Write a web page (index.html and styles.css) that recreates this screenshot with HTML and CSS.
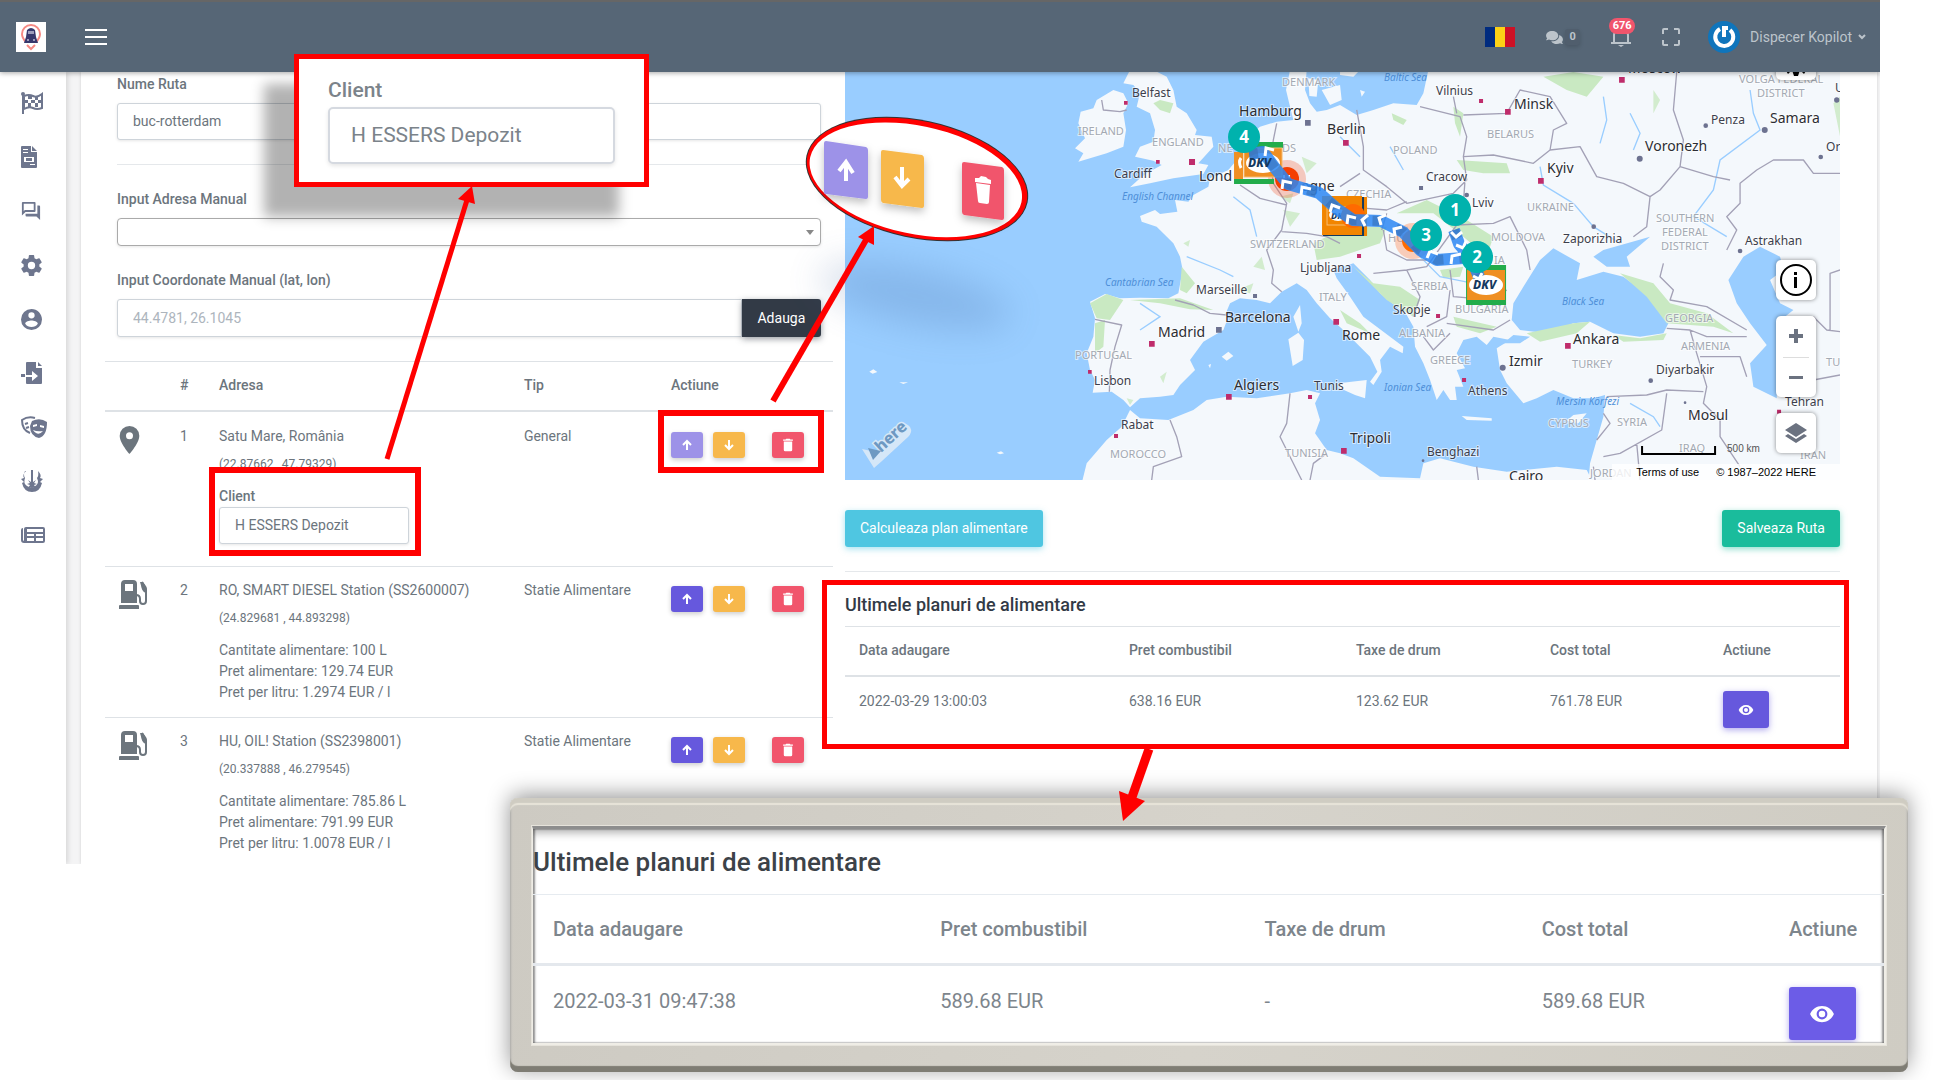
FILE: index.html
```html
<!DOCTYPE html>
<html lang="ro">
<head>
<meta charset="utf-8">
<meta name="viewport" content="width=device-width, initial-scale=1">
<title>Kopilot</title>
<link rel="stylesheet" href="styles.css">
</head>
<body>
<svg class="sprite" aria-hidden="true">
  <symbol id="i-up" viewBox="0 0 24 24"><path d="M12 22V4M4 12l8-8 8 8" fill="none" stroke="currentColor" stroke-width="4"/></symbol>
  <symbol id="i-down" viewBox="0 0 24 24"><path d="M12 2v18M4 12l8 8 8-8" fill="none" stroke="currentColor" stroke-width="4"/></symbol>
  <symbol id="i-trash" viewBox="4 2 16 20"><path d="M19,4H15.5L14.5,3H9.5L8.5,4H5V6H19M6,19A2,2 0 0,0 8,21H16A2,2 0 0,0 18,19V7H6V19Z"/></symbol>
  <symbol id="i-eye" viewBox="0 0 24 24"><path d="M12,9A3,3 0 0,0 9,12A3,3 0 0,0 12,15A3,3 0 0,0 15,12A3,3 0 0,0 12,9M12,17A5,5 0 0,1 7,12A5,5 0 0,1 12,7A5,5 0 0,1 17,12A5,5 0 0,1 12,17M12,4.5C7,4.5 2.73,7.61 1,12C2.73,16.39 7,19.5 12,19.5C17,19.5 21.27,16.39 23,12C21.27,7.61 17,4.5 12,4.5Z"/></symbol>
  <symbol id="i-pin" viewBox="5 2 14 20"><path d="M12,11.5A2.5,2.5 0 0,1 9.5,9A2.5,2.5 0 0,1 12,6.5A2.5,2.5 0 0,1 14.5,9A2.5,2.5 0 0,1 12,11.5M12,2A7,7 0 0,0 5,9C5,14.25 12,22 12,22C12,22 19,14.25 19,9A7,7 0 0,0 12,2Z"/></symbol>
  <symbol id="i-pump" viewBox="0 0 29 29"><path fill-rule="evenodd" d="M2 23V4q0-4 4-4h8q4 0 4 4v19zM6 4v7h8V4zM1 25h18q1 0 1 1v3H0v-3q0-1 1-1z"/><path d="M17 15q4 0 4 4v2c0 4 6 4 6 0V10q0-3-2-5l-2-3 1 7q1 3 4 3" fill="none" stroke="currentColor" stroke-width="2"/><path d="M21 2l3 0 4 7-1 3-4-3z"/></symbol>
</svg>

<div class="stage">
<div class="app">
  <header class="topbar">
    <a class="brand" href="#" aria-label="Kopilot"><svg width="30" height="30" viewBox="0 0 30 30"><path fill="#fff" d="M0 0h30v30H0z"/><path d="M15 3c-5 0-9 4-9 9 0 3 2 6 4 8M15 3c5 0 9 4 9 9 0 3-2 6-4 8M11 23l4 4 4-4" fill="none" stroke="#f58a84" stroke-width="2"/><path fill="#37386c" d="M11 8q4-4 8 0l1 7 2 6H8l2-6z"/><path fill="#9d9dbb" d="M12 9h6v3h-6zM11 17h2v2h-2zM17 17h2v2h-2z"/></svg></a>
    <button class="burger" type="button" aria-label="Meniu"><span></span><span></span><span></span></button>
    <div class="tools">
      <svg class="flag" width="30" height="20" viewBox="0 0 30 20"><path fill="#002b7f" d="M0 0h10v20H0z"/><path fill="#fcd116" d="M10 0h10v20H10z"/><path fill="#ce1126" d="M20 0h10v20H20z"/></svg>
      <button class="chat" type="button" aria-label="Mesaje"><svg width="17" height="15" viewBox="0 0 576 512"><path d="M416 192c0-88.400-93.100-160-208-160S0 103.600 0 192c0 34.300 14.100 65.900 38 92-13.400 30.200-35.500 54.200-35.800 54.500-2.200 2.300-2.800 5.700-1.500 8.700S4.800 352 8 352c36.600 0 66.900-12.300 88.700-25 32.200 15.700 70.300 25 111.300 25 114.900 0 208-71.600 208-160zm122 220c23.900-26 38-57.700 38-92 0-66.900-53.500-124.200-129.300-148.100.9 6.600 1.300 13.300 1.300 20.100 0 105.900-107.700 192-240 192-10.800 0-21.300-.8-31.700-1.900C207.800 439.600 281.800 480 368 480c41 0 79.100-9.200 111.300-25 21.800 12.700 52.100 25 88.700 25 3.200 0 6.100-1.900 7.300-4.800 1.300-2.900.7-6.300-1.500-8.700-.3-.3-22.400-24.200-35.800-54.500z"/></svg><span class="count">0</span></button>
      <button class="bell" type="button" aria-label="Notificari"><svg width="22" height="22" viewBox="0 0 22 22"><path d="M1 17h20M4 17V9a7 7 0 0 1 14 0v8" fill="none" stroke="currentColor" stroke-width="2"/><path d="M8 19h6l-3 2z"/></svg><span class="alerts">676</span></button>
      <button class="full" type="button" aria-label="Ecran complet"><svg width="18" height="18" viewBox="0 0 18 18"><path d="M1 6V2q0-1 1-1h4M12 1h4q1 0 1 1v4M17 12v4q0 1-1 1h-4M6 17H2q-1 0-1-1v-4" fill="none" stroke="currentColor" stroke-width="2"/></svg></button>
      <button class="user" type="button"><svg width="32" height="32" viewBox="0 0 32 32"><circle cx="16" cy="16" r="16" fill="#0f75bc"/><path d="M12 8a9 9 0 1 0 10 1M16 5v11M14 7h6" fill="none" stroke="#fff" stroke-width="4"/></svg><span>Dispecer Kopilot</span><svg width="8" height="6" viewBox="0 0 8 6"><path d="M1 1l3 3 3-3" fill="none" stroke="currentColor" stroke-width="2"/></svg></button>
    </div>
  </header>

  <div class="shell">
    <nav class="sidebar" aria-label="Navigare">
      <a href="#" aria-label="Curse"><svg width="22" height="22" viewBox="0 0 22 22"><circle cx="2" cy="2" r="2"/><path d="M1 2h2v20H1z"/><path d="M3 4q5-2 9 0t9-2v14q-5 2-9 0t-9 1z" fill="none" stroke="currentColor" stroke-width="2"/><path d="M7 4h4v3H7zM14 5h3v3h-3zM4 8h3v3H4zM10 8h4v3h-4zM17 8h3v3h-3zM7 11h3v4H7zM14 11h3v4h-3z"/></svg></a>
      <a href="#" aria-label="Facturi"><svg width="16" height="22" viewBox="0 0 16 22"><path fill-rule="evenodd" d="M0 1q0-1 1-1h9v6h6v15q0 1-1 1H1q-1 0-1-1zM2 3v1h5V3zM2 6v1h5V6zM3 11v5h10v-5zM9 18v1h5v-1zM5 12h6v3H5zM11 0l5 5h-5z"/></svg></a>
      <a href="#" aria-label="Mesaje"><svg width="20" height="20" viewBox="1 1 22 22"><path d="M15,4V11H5.170L4,12.170V4H15M16,2H3A1,1 0 0,0 2,3V17L6,13H16A1,1 0 0,0 17,12V3A1,1 0 0,0 16,2M21,6H19V15H6V17A1,1 0 0,0 7,18H18L22,22V7A1,1 0 0,0 21,6Z"/></svg></a>
      <a href="#" aria-label="Setari"><svg width="21" height="21" viewBox="2 2 20 20"><path d="M12,15.500A3.500,3.500 0 0,1 8.500,12A3.500,3.500 0 0,1 12,8.500A3.500,3.500 0 0,1 15.500,12A3.500,3.500 0 0,1 12,15.500M19.430,12.970C19.470,12.650 19.500,12.330 19.500,12C19.500,11.670 19.470,11.340 19.430,11L21.540,9.370C21.730,9.220 21.780,8.950 21.660,8.730L19.660,5.270C19.540,5.050 19.270,4.960 19.050,5.050L16.560,6.050C16.040,5.660 15.500,5.320 14.870,5.070L14.500,2.420C14.460,2.180 14.250,2 14,2H10C9.750,2 9.540,2.180 9.500,2.420L9.130,5.070C8.500,5.320 7.960,5.660 7.440,6.050L4.950,5.050C4.730,4.960 4.460,5.050 4.340,5.270L2.340,8.730C2.210,8.950 2.270,9.220 2.460,9.370L4.570,11C4.530,11.340 4.500,11.670 4.500,12C4.500,12.330 4.530,12.650 4.570,12.970L2.460,14.630C2.270,14.780 2.210,15.050 2.340,15.270L4.340,18.730C4.460,18.950 4.730,19.030 4.950,18.950L7.440,17.940C7.960,18.340 8.500,18.680 9.130,18.930L9.500,21.580C9.540,21.820 9.750,22 10,22H14C14.250,22 14.460,21.820 14.500,21.580L14.870,18.930C15.500,18.670 16.040,18.340 16.560,17.940L19.050,18.950C19.270,19.030 19.540,18.950 19.660,18.730L21.660,15.270C21.780,15.050 21.730,14.780 21.540,14.630L19.430,12.970Z"/></svg></a>
      <a href="#" aria-label="Cont"><svg width="21" height="21" viewBox="2 2 20 20"><path d="M12,19.200C9.500,19.200 7.290,17.920 6,16C6.030,14 10,12.900 12,12.900C14,12.900 17.970,14 18,16C16.710,17.920 14.500,19.200 12,19.200M12,5A3,3 0 0,1 15,8A3,3 0 0,1 12,11A3,3 0 0,1 9,8A3,3 0 0,1 12,5M12,2A10,10 0 0,0 2,12A10,10 0 0,0 12,22A10,10 0 0,0 22,12C22,6.470 17.500,2 12,2Z"/></svg></a>
      <a href="#" aria-label="Import"><svg width="22" height="22" viewBox="0 0 22 22"><path fill-rule="evenodd" d="M5 1q0-1 1-1h9v6h6v15q0 1-1 1H6q-1 0-1-1v-6h6v4l6-5-6-5v4H5zM0 12h4v3H0zM17 0l4 4h-4z"/></svg></a>
      <a href="#" aria-label="Roluri"><svg width="26" height="22" viewBox="0 0 26 22"><path d="M14 2Q7 0 1 4q0 10 8 13" fill="none" stroke="currentColor" stroke-width="2"/><path d="M4 8l3-1M5 12l3-1" stroke="currentColor" stroke-width="2"/><path fill-rule="evenodd" d="M11 5q8-4 15 1 0 14-8 16-9-2-9-12zM12 9v2l4-1V8zM19 9v2l4 1v-2zM12 14q5 7 10 1-6 1-10-1z"/></svg></a>
      <a href="#" aria-label="Ordine"><svg width="22" height="22" viewBox="0 0 22 22"><path d="M5 1Q1 5 3 8L0 9l3 3-2 1q2 9 10 9t10-9l-2-1 3-3-3-1q2-3-2-7 1 5-1 7 3 6-3 9-4 1-7-1-4-3-2-8-2-3 0-7z"/><path d="M10 0h2v12l3-2-2 3 3 1-3 1 2 3-3-1-1 3-1-3-3 1 2-3-3-1 3-1-2-3 3 2z"/></svg></a>
      <a href="#" aria-label="Stiri"><svg width="24" height="16" viewBox="0 0 24 16"><path fill-rule="evenodd" d="M5 0h17q2 0 2 2v12q0 2-2 2H3q-3 0-3-3V3q0-2 2-2v12q1 2 1 0V2q0-2 2-2zM6 2v3h16V2zM6 7v2h7V7zM15 7v2h7V7zM6 11v3h7v-3zM15 11v3h7v-3z"/></svg></a>
    </nav>

    <main class="card">
      <section class="col-form">
        <label class="lbl" for="nume">Nume Ruta</label>
        <input class="field" id="nume" type="text" value="buc-rotterdam">
        <hr>
        <label class="lbl" for="adresa">Input Adresa Manual</label>
        <div class="pick-wrap"><select class="pick" id="adresa"><option></option></select><svg width="8" height="5" viewBox="0 0 8 5"><path d="M0 0h8L4 5z"/></svg></div>
        <label class="lbl" for="coord">Input Coordonate Manual (lat, lon)</label>
        <div class="group"><input class="field" id="coord" type="text" placeholder="44.4781, 26.1045"><button class="add" type="button">Adauga</button></div>

        <table class="grid stops">
          <colgroup><col class="c-icon"><col class="c-no"><col><col class="c-type"><col class="c-act"></colgroup>
          <thead><tr><th></th><th>#</th><th>Adresa</th><th>Tip</th><th>Actiune</th></tr></thead>
          <tbody>
            <tr>
              <td><svg class="pin" width="21" height="28"><use href="#i-pin"/></svg></td><td>1</td>
              <td>Satu Mare, România<small>(22.87662 , 47.79329)</small>
                <label class="client-lbl" for="client">Client</label><input class="field client" id="client" type="text" value="H ESSERS Depozit"></td>
              <td>General</td>
              <td><div class="acts"><button class="b up faded" type="button" aria-label="Sus"><svg><use href="#i-up"/></svg></button><button class="b down" type="button" aria-label="Jos"><svg><use href="#i-down"/></svg></button><button class="b del" type="button" aria-label="Sterge"><svg><use href="#i-trash"/></svg></button></div></td>
            </tr>
            <tr>
              <td><svg width="29" height="29"><use href="#i-pump"/></svg></td><td>2</td>
              <td>RO, SMART DIESEL Station (SS2600007)<small>(24.829681 , 44.893298)</small>
                <div class="info">Cantitate alimentare: 100 L<br>Pret alimentare: 129.74 EUR<br>Pret per litru: 1.2974 EUR / l</div></td>
              <td>Statie Alimentare</td>
              <td><div class="acts"><button class="b up" type="button" aria-label="Sus"><svg><use href="#i-up"/></svg></button><button class="b down" type="button" aria-label="Jos"><svg><use href="#i-down"/></svg></button><button class="b del" type="button" aria-label="Sterge"><svg><use href="#i-trash"/></svg></button></div></td>
            </tr>
            <tr>
              <td><svg width="29" height="29"><use href="#i-pump"/></svg></td><td>3</td>
              <td>HU, OIL! Station (SS2398001)<small>(20.337888 , 46.279545)</small>
                <div class="info">Cantitate alimentare: 785.86 L<br>Pret alimentare: 791.99 EUR<br>Pret per litru: 1.0078 EUR / l</div></td>
              <td>Statie Alimentare</td>
              <td><div class="acts"><button class="b up" type="button" aria-label="Sus"><svg><use href="#i-up"/></svg></button><button class="b down" type="button" aria-label="Jos"><svg><use href="#i-down"/></svg></button><button class="b del" type="button" aria-label="Sterge"><svg><use href="#i-trash"/></svg></button></div></td>
            </tr>
          </tbody>
        </table>
      </section>

      <section class="col-map">
        <div class="map">
          <svg class="geo" viewBox="0 0 995 408" preserveAspectRatio="xMidYMid slice">
            <g transform="scale(.33333) translate(-15 -6)">
              <g class="land">
                <path d="M1350 0L1338 60 1350 110 1360 150 1310 155 1260 170 1235 190 1215 240 1190 270 1165 300 1110 325 1105 350 1060 375 1045 395 1005 390 1012 425 960 432 945 420 900 438 905 455 950 470 975 495 1000 520 1020 560 1028 600 1015 670 985 685 900 683 840 685 795 672 750 695 765 745 760 800 740 850 750 900 765 930 758 968 815 965 850 990 870 1012 900 985 960 980 1000 975 1020 945 1065 900 1050 870 1090 815 1150 780 1165 740 1155 735 1170 700 1200 685 1250 690 1290 700 1325 665 1370 640 1400 660 1430 700 1470 745 1510 780 1560 830 1590 860 1612 905 1590 935 1600 945 1625 905 1620 870 1650 830 1688 850 1690 830 1610 770 1570 740 1530 680 1490 625 1480 600 1540 580 1560 600 1590 630 1620 670 1700 735 1720 770 1725 830 1750 880 1770 930 1790 990 1810 960 1830 990 1850 990 1845 950 1870 950 1850 900 1875 895 1850 850 1870 810 1910 800 1940 825 1960 800 2010 810 1970 835 1980 900 2000 940 2050 1000 2090 985 2140 960 2200 985 2260 985 2295 975 2290 1040 2270 1110 2250 1180 2245 1240H3010V0z"/>
                <path d="M725 1240L740 1180 800 1110 845 1070 870 1020 900 1045 985 1050 1060 1020 1100 990 1160 980 1250 985 1350 970 1400 960 1440 970 1425 1000 1440 1050 1425 1090 1460 1140 1500 1150 1540 1165 1620 1220 1740 1225 1750 1180 1800 1165 1900 1190 2000 1205 2150 1190 2240 1200 2260 1240z"/>
                <path d="M870 0L850 40 880 45 900 70 890 110 930 130 945 180 940 215 900 230 885 260 940 272 965 285 920 310 900 325 870 352 930 340 1000 325 1090 312 1105 285 1075 280 1120 230 1115 200 1065 195 1070 180 1040 130 1010 110 1000 60 980 20 940 0z"/>
                <path d="M770 90L820 60 850 70 865 100 850 130 858 180 850 230 800 250 715 275 730 250 705 235 735 205 715 160 722 125 760 115z"/>
                <path d="M1360 740L1380 705 1385 760 1375 785zM1345 808L1375 788 1392 810 1388 870 1358 888zM1145 860L1165 845 1180 858 1160 872zM1105 885L1113 882 1110 895zM1195 842L1207 846zM1495 940L1580 930 1575 985 1545 975 1500 955zM1865 1038L1955 1045 1955 1052 1880 1050zM2180 1052L2200 1035 2240 1030 2215 1060z"/>
              </g>
              <g fill="#99cdff">
                <path d="M1400 0L1765 0 1750 70 1730 105 1660 100 1600 120 1550 135 1500 105 1460 120 1430 125 1410 100 1395 60z"/>
                <path d="M2050 650L2100 570 2140 535 2220 580 2210 630 2290 605 2350 620 2430 680 2485 760 2470 790 2400 800 2320 790 2250 755 2200 760 2120 790 2040 780 2015 750 2020 700zM2300 590L2260 560 2290 540 2430 500 2360 560 2370 590zM1990 820L2020 795 2070 800 2040 820z"/>
                <path d="M2710 560L2760 530 2820 560 2830 600 2790 630 2820 700 2860 720 2810 760 2810 985 2740 950 2730 880 2780 825 2730 760 2690 700 2665 630z"/>
              </g>
              <path class="land" d="M1405 25L1435 30 1430 80 1408 78zM1445 60L1500 45 1505 90 1470 105zM1500 0L1560 0 1540 20 1500 15zM1560 60L1575 65 1565 80z"/>
              <g fill="#c9e9c2">
                <path d="M750 700L800 672 850 690 830 720 810 750 770 745zM765 760L795 750 790 830 765 850zM870 690L1020 685 1120 720 1050 718 960 700zM1025 590L1065 640 1040 670 1020 660zM940 100L960 90 1000 100 990 130 960 120zM1420 520L1520 470 1640 470 1620 520 1500 560 1430 570zM1540 590L1600 640 1680 650 1740 690 1720 740 1640 690zM1670 430L1760 390 1880 450 1960 500 1940 560 1870 500 1780 430zM1850 270L2000 280 2010 310 1930 310 1870 300zM1655 130L1700 150 1690 165 1660 150zM2060 790L2200 760 2250 755 2210 790 2100 815zM2340 610L2440 640 2490 700 2600 730 2680 790 2620 770 2480 760 2420 680zM2320 795L2400 805 2480 790 2470 810 2350 815zM1840 740L1970 770 1920 790 1850 770zM1800 600L1870 590 1860 620 1810 625zM1500 720L1560 760 1590 790 1520 760zM1840 110L1870 130 1860 200 1845 160zM2110 20L2200 6 2290 20 2240 80 2180 60z"/>
                <path d="M1320 380L1360 370 1350 400zM1330 420L1380 430 1350 470zM1240 590L1265 560 1275 600zM1190 660L1240 640 1230 670zM1030 520L1050 510 1045 530zM960 920L980 905 970 940zM860 985L880 990 870 1005zM1385 260L1430 280 1400 310zM2440 60L2460 90 2440 130zM2980 100L3000 80 3000 200z" opacity=".8"/>
              </g>
              <g class="rivers"><path d="M2100 290L2110 345 2200 400 2260 470 2340 520M2730 60L2740 130 2760 180 2640 270 2620 360 2560 440 2660 500M2280 220L2300 150 2290 80M2370 130L2400 190 2380 240M1950 600L1900 640 1800 620 1740 560 1700 470M1500 200L1560 260M1650 230L1690 300M900 700L960 740 900 780M1180 620L1140 600 1040 560M1250 500L1230 420 1180 380M2370 1000L2440 1040 2460 1070"/></g>
              <g class="borders"><path d="M785 90L790 120 840 125 860 120M1005 690L1060 705 1110 730 1160 735M765 748L845 765 825 830 810 900 808 965M1310 160L1300 210 1290 270 1300 340 1340 400 1325 480 1280 540 1300 600 1295 640 1325 665M1200 345L1260 385 1340 405M1325 485L1400 490 1460 500 1500 520M1550 120L1570 230 1570 300 1640 350 1700 400 1840 370 1880 330 1870 260 1880 200 1860 140 1740 110M1500 350L1560 310M1580 415L1640 420 1700 395M1625 480L1640 430M1870 260L1960 255 2080 280 2130 240 2140 180 2180 160 2130 80 2040 60 2000 130 1870 135M1840 80L1850 130M2130 240L2220 230 2270 320 2350 340 2430 380 2420 470 2380 500M1875 330L1870 400 1850 465 1960 460 2010 440 2060 540 2070 600M1600 610L1700 600 1760 590 1850 465M1630 480L1640 540 1700 570 1760 570M1700 600L1740 680 1720 740M1830 600L1840 680 1960 690 2000 660M1830 660L1820 740 1760 770M1820 760L1960 780 2010 750M1750 800L1780 840 1830 790M2510 6L2500 120 2530 210 2520 290 2460 360 2430 380M2520 290L2620 320 2670 330M3000 310L2920 310 2890 270 2800 270 2750 300 2700 340 2700 400 2660 440 2690 480 2660 540M2470 580L2460 620 2500 660 2490 690 2600 710 2720 780M2480 775L2550 780 2570 850 2600 950 2590 1000 2640 1050 2640 1100 2700 1190M2300 980L2420 975 2480 960 2590 965M2480 970L2465 1080 2340 1150 2290 1160M2290 1030L2310 1060 2270 1110M2390 1120L2400 1230M2550 780L2600 800 2720 800M2580 860L2700 860 2720 920M2920 930L3000 915M2970 780V610L3000 600M2920 740L2960 780 3000 785M990 1050L1010 1100 1025 1160 940 1190 935 1230M1350 970L1340 1060 1320 1100 1350 1160 1385 1230M1410 1230L1420 1180 1460 1150M1910 1190L1915 1230M2260 1190L2265 1230"/></g>
              <g class="cap"><path d="M852 93h11v11h-11zM948 270h11v11h-11zM1047 267h18v18h-18zM1480 747h17v17h-17zM927 813h17v17h-17zM744 900h11v11h-11zM1158 972h17v17h-17zM1404 975h12v12h-12zM822 1092h12v12h-12zM1509 210h17v17h-17zM1917 87h12v12h-12zM1995 117h17v17h-17zM2094 324h17v17h-17zM2337 21h17v17h-17zM1551 552h12v12h-12zM1788 732h12v12h-12zM2175 819h17v17h-17zM1866 924h12v12h-12zM1503 1134h17v17h-17zM2811 1019h12v12h-12z"/></g>
              <g class="town"><path d="M1395 150h17v17h-17zM1239 672h12v12h-12zM1128 771h17v17h-17zM1737 348h12v12h-12z"/><circle cx="1880" cy="375" r="7"/><circle cx="2261" cy="470" r="7"/><circle cx="2399" cy="266" r="9"/><circle cx="2597" cy="167" r="7"/><circle cx="2774" cy="180" r="9"/><circle cx="2942" cy="261" r="7"/><circle cx="2990" cy="90" r="8"/><circle cx="2700" cy="543" r="7"/><circle cx="1988" cy="893" r="9"/><circle cx="2432" cy="932" r="7"/><circle cx="2535" cy="998" r="4"/><circle cx="1749" cy="1172" r="4"/></g>
              <path class="land" d="M88 905L100 898 112 906 98 911zM178 937L204 937 190 942zM470 1148L483 1144 492 1150 480 1153z"/>
            </g>
            <g class="sea"><text x="277" y="128">English Channel</text><text x="260" y="214">Cantabrian Sea</text><text x="539" y="9">Baltic Sea</text><text x="717" y="233">Black Sea</text><text x="539" y="319">Ionian Sea</text><text x="711" y="333">Mersin Körfezi</text></g>
            <g class="land-name"><text x="233" y="63">IRELAND</text><text x="307" y="74">ENGLAND</text><text x="437" y="14">DENMARK</text><text x="373" y="80">NE</text><text x="437" y="80">DS</text><text x="405" y="176">SWITZERLAND</text><text x="474" y="229">ITALY</text><text x="230" y="287">PORTUGAL</text><text x="265" y="386">MOROCCO</text><text x="440" y="385">TUNISIA</text><text x="642" y="66">BELARUS</text><text x="548" y="82">POLAND</text><text x="501" y="126">CZECHIA</text><text x="682" y="139">UKRAINE</text><text x="894" y="11">VOLGA FEDERAL</text><text x="912" y="25">DISTRICT</text><text x="543" y="170">HU</text><text x="646" y="169">MOLDOVA</text><text x="649" y="192">IA</text><text x="811" y="150">SOUTHERN</text><text x="817" y="164">FEDERAL</text><text x="816" y="178">DISTRICT</text><text x="566" y="218">SERBIA</text><text x="610" y="241">BULGARIA</text><text x="554" y="265">ALBANIA</text><text x="820" y="250">GEORGIA</text><text x="836" y="278">ARMENIA</text><text x="727" y="296">TURKEY</text><text x="585" y="292">GREECE</text><text x="772" y="354">SYRIA</text><text x="703" y="355">CYPRUS</text><text x="834" y="380">IRAQ</text><text x="955" y="387">IRAN</text><text x="745" y="405">JORDAN</text><text x="981" y="294">TU</text></g>
            <g class="city"><text x="287" y="25">Belfast</text><text x="269" y="106">Cardiff</text><text x="455" y="200">Ljubljana</text><text x="351" y="222">Marseille</text><text x="249" y="313">Lisbon</text><text x="469" y="318">Tunis</text><text x="276" y="357">Rabat</text><text x="591" y="23">Vilnius</text><text x="581" y="109">Cracow</text><text x="627" y="135">Lviv</text><text x="718" y="171">Zaporizhia</text><text x="900" y="173">Astrakhan</text><text x="866" y="52">Penza</text><text x="981" y="79">Or</text><text x="990" y="20">U</text><text x="548" y="242">Skopje</text><text x="811" y="302">Diyarbakir</text><text x="623" y="323">Athens</text><text x="940" y="334">Tehran</text><text x="582" y="384">Benghazi</text></g>
            <g class="city big"><text x="354" y="109">Lond</text><text x="394" y="44">Hamburg</text><text x="456" y="119">ogne</text><text x="380" y="250">Barcelona</text><text x="313" y="265">Madrid</text><text x="389" y="318">Algiers</text><text x="669" y="37">Minsk</text><text x="482" y="62">Berlin</text><text x="702" y="101">Kyiv</text><text x="800" y="79">Voronezh</text><text x="925" y="51">Samara</text><text x="783" y="1">Moscow</text><text x="497" y="268">Rome</text><text x="728" y="272">Ankara</text><text x="664" y="294">Izmir</text><text x="843" y="348">Mosul</text><text x="505" y="371">Tripoli</text><text x="664" y="409">Cairo</text></g>

            <g class="pins">
              <circle cx="442" cy="107" r="19" fill="#f55a30" opacity=".3"/><circle cx="442" cy="107" r="12" fill="#f43f00"/><path d="M439 103v3M444 103v4" stroke="#fff" stroke-width="2"/>
              <path fill="#22ac4b" d="M398 70h40v6h-40zM389 107h40v5h-40z"/><path fill="#ef8f22" d="M389 80h9v27h-9z"/><path fill="#ef8f22" stroke="#f7bd73" d="M399 76h38v29h-38z"/><path d="M396 86q-3 4 0 10" fill="none" stroke="#fff" stroke-width="3"/><ellipse cx="418" cy="91" rx="17" ry="10" fill="#fff"/>
              <path fill="#14395e" d="M478 125h42v39h-42z"/><path fill="#f28500" d="M477 124h40v39h-40zM519 125h3v39h-3z"/><path fill="none" stroke="#f7bd73" d="M482 135h32v18h-32z"/><ellipse cx="493" cy="143" rx="9" ry="6" fill="#fff"/><text class="dkv small" x="486" y="147">DK</text><circle cx="508" cy="144" r="12" fill="#ff6a00"/>
              <circle cx="568" cy="169" r="18" fill="#ff7a3c" opacity=".35"/><circle cx="568" cy="169" r="11" fill="#ff6a00"/>
              <path fill="#22ac4b" d="M621 193h40v40h-40z"/><path fill="#ef8f22" d="M622 198h38v30h-38z"/><ellipse cx="641" cy="213" rx="17" ry="10" fill="#fff"/>
              <path class="route" d="M404 82L418 80 430 96 443 112 474 121 492 137 508 148 536 149 558 160 575 178 592 188 618 186 628 182M609 158L614 172 626 186 634 205"/>
              <path class="heading" d="M404 82L418 80 430 96 443 112 474 121 492 137 508 148 536 149 558 160 575 178 592 188 618 186 628 182M609 158L614 172 626 186 634 205"/>
              <text class="dkv" x="403" y="95">DKV</text><text class="dkv" x="628" y="217">DKV</text>
              <g class="arrows"><path d="M420 84l1-8 8 2M437 117l1-8 9 2M456 123l1-8 9 2M485 140l2-7 8 3M502 152l1-8 8 2M520 154l-3-6 6-5M536 153l-2-7 7-3M550 164l-1-7 8-2M582 186l3-7 8 3M606 192l1-8 9-2M606 160l5 5 6-5M611 173l7 3 3-7M628 204l6 3 3-6"/></g>
              <g fill="#00b2ad"><circle cx="399" cy="65" r="16"/><circle cx="610" cy="138" r="16"/><circle cx="632" cy="185" r="16"/><circle cx="581" cy="163" r="16"/></g>
              <g class="num"><text x="399" y="71">4</text><text x="610" y="144">1</text><text x="632" y="191">2</text><text x="581" y="169">3</text></g>
            </g>
            <g class="here"><path d="M17 377l14 3 25-28q5-2 9 3 3 5-2 10l-26 24-8 7z"/><text transform="translate(36 381) rotate(-43)">here</text><path class="tip" d="M23 376l13 3-8 9z"/></g>
            <path d="M797 374v8h73v-8" fill="none" stroke="#000" stroke-width="2"/><text class="km" x="882" y="380">500 km</text>
          </svg>
          <div class="controls">
            <button class="ctl half" type="button" aria-label="Harta"><svg width="30" height="12" viewBox="0 0 30 12"><path d="M4 2l4-2 3 3-4 4zM11 3h8l-2 6h-4zM19 3l3-3 4 2-3 5z"/></svg></button>
            <button class="ctl" type="button" aria-label="Informatii"><svg width="34" height="34" viewBox="0 0 34 34"><circle cx="17" cy="17" r="15" fill="none" stroke="#000" stroke-width="2"/><path d="M15 14h3v11h-3zM15 9h3v3h-3z"/></svg></button>
            <div class="zoom"><button type="button" aria-label="Mareste"><svg width="14" height="14"><path d="M5 0h4v14H5zM0 5h14v4H0z"/></svg></button><button type="button" aria-label="Micsoreaza"><svg width="14" height="14"><path d="M0 6h14v3H0z"/></svg></button></div>
            <button class="ctl grey" type="button" aria-label="Straturi"><svg width="22" height="22" viewBox="0 0 22 22"><path d="M11 1l11 7-11 7L0 8zM0 14l3-2 8 5 8-5 3 2-11 7z"/></svg></button>
          </div>
          <div class="terms"><a href="#">Terms of use</a><span>© 1987–2022 HERE</span></div>
        </div>

        <div class="bar"><button class="btn sky" type="button">Calculeaza plan alimentare</button><button class="btn green" type="button">Salveaza Ruta</button></div>
        <hr>
        <h2>Ultimele planuri de alimentare</h2>
        <table class="grid plans">
          <colgroup><col class="p1"><col class="p2"><col class="p3"><col class="p4"><col class="p5"></colgroup>
          <thead><tr><th>Data adaugare</th><th>Pret combustibil</th><th>Taxe de drum</th><th>Cost total</th><th>Actiune</th></tr></thead>
          <tbody><tr><td>2022-03-29 13:00:03</td><td>638.16 EUR</td><td>123.62 EUR</td><td>761.78 EUR</td><td><button class="view" type="button" aria-label="Vezi"><svg width="16" height="16"><use href="#i-eye"/></svg></button></td></tr></tbody>
        </table>
      </section>
    </main>
  </div>
</div>

<div class="mark mark-client"></div>
<div class="mark mark-acts"></div>
<div class="mark mark-plans"></div>

<div class="zoom-client">
  <label for="client-zoom">Client</label>
  <input id="client-zoom" type="text" value="H ESSERS Depozit">
</div>

<section class="frame">
  <div class="pane">
    <h2>Ultimele planuri de alimentare</h2>
    <table>
      <colgroup><col class="f1"><col class="f2"><col class="f3"><col class="f4"><col class="f5"></colgroup>
      <thead><tr><th>Data adaugare</th><th>Pret combustibil</th><th>Taxe de drum</th><th>Cost total</th><th>Actiune</th></tr></thead>
      <tbody><tr><td>2022-03-31 09:47:38</td><td>589.68 EUR</td><td>-</td><td>589.68 EUR</td><td><button class="view" type="button" aria-label="Vezi"><svg width="26" height="26"><use href="#i-eye"/></svg></button></td></tr></tbody>
    </table>
  </div>
</section>

<svg class="notes" width="1200" height="830" viewBox="0 0 1200 830" aria-hidden="true">
  <defs><filter id="soft" x="-30%" y="-80%" width="160%" height="260%"><feGaussianBlur stdDeviation="18"/></filter><filter id="drop" x="-30%" y="-30%" width="160%" height="170%"><feDropShadow dx="0" dy="4" stdDeviation="4" flood-opacity=".25"/></filter></defs>
  <ellipse cx="915" cy="296" rx="98" ry="28" transform="rotate(12 915 296)" fill="#3b5f9a" opacity=".2" filter="url(#soft)"/>
  <g transform="rotate(12 917 179)"><ellipse cx="917" cy="179" rx="113" ry="59" fill="#333"/><ellipse cx="917" cy="179" rx="112" ry="58" fill="red"/><ellipse cx="916" cy="180" rx="108" ry="54" fill="#fff"/></g>
  <g filter="url(#drop)"><path fill="#9d92e8" d="M826 141q-2 0-2 2v49q0 2 2 2l40 5q2 0 2-2v-47q0-2-2-3z"/><path fill="#f7b84b" d="M883 150q-2 0-2 2v48q0 2 2 3l39 5q2 0 2-2v-48q0-2-2-3z"/><path fill="#f1556c" d="M964 162q-2 0-2 2v48q0 2 2 3l38 5q2 0 2-2v-48q0-2-2-3z"/></g>
  <path d="M846 181v-19M839 171l7-9 7 11M902 167v19M895 177l7 9 7-7" fill="none" stroke="#fff" stroke-width="4"/>
  <path fill="#fff" d="M975 178h4l2-2 5 1 2 2 3 1v4l-16-2zM976 183l14 2-1 17q0 2-2 2l-7-1q-2 0-2-2z"/>
  <g stroke="red" fill="red"><path d="M387 459L467 200" stroke-width="5"/><path stroke="none" d="M472 186l3 18-17-5z"/><path d="M773 401L866 240" stroke-width="6"/><path stroke="none" d="M874 226v19l-16-8z"/><path d="M1149 749L1131 800" stroke-width="9"/><path stroke="none" d="M1123 821l-4-30 26 10z"/></g>
</svg>
</div>
</body>
</html>
```
FILE: styles.css
```css
* { box-sizing: border-box; }
body { margin: 0; background: #fff; color: #6c757d; font: 14px/21px Roboto, sans-serif; }
button, input, select { font: inherit; color: inherit; margin: 0; }
button { border: 0; padding: 0; background: none; cursor: pointer; }
svg { display: block; fill: currentColor; }
h2 { margin: 0; color: #323a46; font-weight: 500; }
hr { border: 0; border-top: 1px solid #e5e8eb; margin: 24px 0; }
.sprite { position: absolute; width: 0; height: 0; }
.stage { position: relative; overflow: hidden; min-height: calc(100vh - 9px); }
.app { margin-right: 53px; overflow-x: clip; }

.topbar { position: relative; z-index: 1; display: flex; align-items: center; height: 72px; padding: 0 14px 0 16px; background: #566676; border-top: 2px solid #666; box-shadow: 0 1px 5px rgba(0,0,0,.35); color: #bcc4cb; }
.burger { display: grid; gap: 5px; width: 22px; margin-left: 39px; }
.burger span { height: 2px; background: #fff; }
.tools { display: flex; align-items: center; margin-left: auto; }
.chat { display: flex; align-items: center; gap: 2px; margin-left: 31px; }
.count { width: 15px; font-size: 11px; font-weight: 700; line-height: 16px; border-radius: 3px; background: #505e6d; box-shadow: 0 2px 4px rgba(0,0,0,.15); }
.bell { position: relative; margin-left: 30px; }
.alerts { position: absolute; left: -1px; top: -8px; width: 26px; border-radius: 8px; background: #f1556c; color: #fff; font-size: 11px; font-weight: 700; line-height: 16px; }
.full { margin-left: 30px; }
.user { display: flex; align-items: center; margin-left: 28px; }
.user span { margin: 0 6px 0 10px; }

.shell { display: flex; background: #f4f4f5; }
.sidebar { position: relative; flex: 0 0 66px; padding: 4px 0 0 21px; background: #fff; box-shadow: 2px 0 5px rgba(0,0,0,.12); clip-path: inset(0 -8px 0 0); color: #6e768e; }
.sidebar a { display: flex; align-items: center; height: 54px; color: inherit; }
.card { flex: 1; min-width: 0; display: grid; grid-template-columns: minmax(0, 5fr) minmax(0, 7fr); margin: 0 3px 0 15px; padding: 0 25px 0 24px; background: #fff; box-shadow: 0 0 3px rgba(0,0,0,.15); clip-path: inset(0 -4px); }
.col-form { padding: 2px 12px 0; }
.col-map { padding: 0 12px; }

.lbl { display: block; margin-bottom: 8px; font-weight: 500; }
.field { display: block; width: 100%; height: 37px; padding: 0 15px 1px; border: 1px solid #ced4da; border-radius: 3px; background: #fff; box-shadow: 0 1px 3px rgba(0,0,0,.1); }
.field::placeholder { color: #adb5bd; opacity: 1; }
.pick-wrap { display: grid; align-items: center; margin-bottom: 24px; }
.pick-wrap > * { grid-area: 1 / 1; }
.pick-wrap svg { justify-self: end; margin-right: 7px; color: #888; pointer-events: none; }
.pick { width: 100%; height: 28px; padding: 0 16px; border: 1px solid #aaa; border-radius: 4px; appearance: none; background: #fff; box-shadow: 0 1px 3px rgba(0,0,0,.1); }
.group { display: flex; }
.group .field { flex: 1; height: 38px; border-radius: 3px 0 0 3px; }
.add { width: 79px; background: #323a46; color: #fff; border-radius: 0 3px 3px 0; box-shadow: 0 2px 6px rgba(50,58,70,.5); }

.grid { border-collapse: separate; border-spacing: 0; table-layout: fixed; width: 100%; }
.grid th { height: 51px; padding: 0 14px 1px; border-top: 1px solid #dee2e6; border-bottom: 2px solid #dee2e6; text-align: left; font-weight: 500; }
.grid td { padding: 14px; vertical-align: top; }
.stops { width: calc(100% + 24px); margin: 24px -12px 0; }
.stops tr + tr td { padding-top: 13px; border-top: 1px solid #dee2e6; }
.stops tr:last-child td { padding-bottom: 10px; }
.stops td { white-space: nowrap; }
.c-icon { width: 61px; }
.c-no { width: 39px; }
.c-type { width: 147px; }
.c-act { width: 176px; }
.stops small { display: block; margin-top: 8px; font-size: 12px; line-height: 18px; }
.info { margin-top: 13px; }
.client-lbl { display: block; margin: 13px 0 0; font-weight: 500; }
.client { width: 190px; margin-bottom: 8px; }
.acts { display: flex; padding-top: 6px; }
.b { display: grid; place-items: center; width: 32px; height: 26px; margin-right: 10px; border-radius: 3px; color: #fff; box-shadow: 0 2px 5px rgba(0,0,0,.2); }
.b svg { width: 12px; height: 12px; }
.up { background: #6658dd; }
.faded { background: #9d92e8; }
.down { background: #f7b84b; margin-right: 27px; }
.del { background: #f1556c; }
.del svg { height: 14px; }

.map { position: relative; height: 408px; background: #99cdff; overflow: hidden; }
.geo { width: 100%; height: 100%; }
.land { fill: #f4f8fc; }
.rivers path { fill: none; stroke: #99cdff; stroke-width: 4; }
.borders path { fill: none; stroke: #a3a1b6; stroke-width: 4; stroke-linejoin: round; }
.cap { fill: #bf2c6b; }
.town { fill: #6d7290; }
.geo text { font-family: "Noto Sans", sans-serif; }
.sea text { font-size: 10px; font-style: italic; fill: #4e8fd8; }
.land-name text { font-size: 11px; fill: #a3a9b3; }
.city text { font-size: 12px; fill: #3c3e4c; }
.city.big text { font-size: 14px; fill: #2c2d33; }
.sea text, .land-name text, .city text { stroke: rgba(255,255,255,.6); stroke-width: 2px; paint-order: stroke; }
.sea text { stroke: none; }
.geo .dkv { font-size: 12px; font-weight: 800; font-style: italic; fill: #14395e; }
.geo .small { font-size: 9px; }
.route { fill: none; stroke: #2b87f3; stroke-width: 12; stroke-linejoin: round; opacity: .85; }
.heading { fill: none; stroke: #376fb5; stroke-width: 10; stroke-dasharray: 9 16; opacity: .6; }
.arrows path { fill: none; stroke: #fff; stroke-width: 3; }
.geo .num text { font-size: 17px; font-weight: 700; fill: #fff; text-anchor: middle; }
.here path { fill: #d5e7f8; }
.geo .here text { font-size: 16px; font-weight: 800; fill: #6e99c2; stroke: #d5e7f8; stroke-width: 3px; paint-order: stroke; }
.here .tip { fill: #6e99c2; }
.geo .km { font: 10px "Liberation Sans", sans-serif; fill: #555; }
.controls { position: absolute; top: -32px; right: 24px; width: 40px; color: #6b7280; }
.ctl, .zoom { display: grid; place-items: center; width: 40px; height: 40px; border-radius: 5px; background: #fff; box-shadow: 0 0 4px rgba(0,0,0,.45); }
.ctl { color: #000; }
.half { align-items: end; padding-bottom: 1px; margin-bottom: 180px; }
.zoom { height: 81px; margin: 16px 0; grid-template-rows: 1fr 1fr; }
.zoom button { display: grid; place-items: center; width: 26px; height: 100%; }
.zoom button + button { border-top: 1px solid #ddd; }
.grey { color: #6b7280; }
.terms { position: absolute; right: 0; bottom: 0; display: flex; gap: 17px; padding: 0 24px; background: rgba(255,255,255,.8); color: #000; font: 11px/16px "Liberation Sans", Arial, sans-serif; }
.terms a { color: inherit; text-decoration: none; }

.bar { display: flex; justify-content: space-between; margin-top: 30px; }
.btn { height: 37px; padding: 0 15px; border-radius: 3px; color: #fff; }
.sky { background: #4fc6e1; box-shadow: 0 2px 6px rgba(79,198,225,.5); }
.green { background: #1abc9c; box-shadow: 0 2px 6px rgba(26,188,156,.5); }
.col-map hr { margin-bottom: 21px; }
.col-map h2 { font-size: 18px; line-height: 24px; margin-bottom: 9px; }
.p1 { width: 270px; }
.p2 { width: 227px; }
.p3 { width: 194px; }
.p4 { width: 173px; }
.p5 { width: 131px; }
.view { display: grid; place-items: center; width: 46px; height: 37px; border-radius: 3px; background: #6658dd; color: #fff; box-shadow: 0 2px 6px rgba(102,88,221,.5); }

.mark { position: absolute; border: 6px solid red; pointer-events: none; }
.mark-client { left: 209px; top: 467px; width: 212px; height: 89px; }
.mark-acts { left: 658px; top: 410px; width: 166px; height: 63px; }
.mark-plans { left: 822px; top: 580px; width: 1027px; height: 169px; border-width: 5px; }
.zoom-client { position: absolute; z-index: 2; left: 294px; top: 54px; width: 355px; height: 133px; padding: 17px 29px 0; border: 5px solid red; background: #fff; color: #7b838a; font-size: 21px; line-height: 28px; box-shadow: -30px 30px 12px rgba(0,0,0,.3); }
.zoom-client label { display: block; margin-bottom: 3px; font-weight: 500; }
.zoom-client input { display: block; width: 287px; height: 57px; padding: 0 21px 2px; border: 2px solid #d5d9e0; border-radius: 5px; background: #fff; box-shadow: 0 2px 4px rgba(0,0,0,.1); }
.notes { position: absolute; left: 0; top: 0; z-index: 3; pointer-events: none; }

.frame { position: absolute; left: 510px; top: 798px; right: 25px; padding: 28px 22px 27px; border-radius: 8px; background: linear-gradient(100deg, #cdcac2, #d6d3cb 50%, #cfccc3); box-shadow: inset 0 5px 1px #cfccc2, inset 0 7px 1px #e8e5da, inset 0 -6px 1px #7f7d74, inset 1px 0 2px #aaa, inset -1px 0 2px #aaa, 0 -3px 22px 0 rgba(0,0,0,.42); color: #7d858c; font-size: 20px; line-height: 28px; }
.pane { height: 219px; overflow: hidden; background: #fff; border: 2px solid #efede6; border-top: 3px solid #8d8d8d; border-left-width: 1px; box-shadow: inset 0 8px 8px -4px rgba(0,0,0,.3), inset 2px 0 2px rgba(0,0,0,.4), inset -2px 0 2px rgba(0,0,0,.4), 0 0 0 1px #e6e3db; }
.pane h2 { font-size: 26px; line-height: 34px; padding-top: 16px; margin-bottom: 15px; color: #3c4248; }
.pane table { border-spacing: 0; table-layout: fixed; width: 100%; }
.pane th { height: 72px; padding: 0 20px 1px; text-align: left; font-weight: 500; border-top: 1px solid #e6ebf0; border-bottom: 3px solid #e4e8ed; white-space: nowrap; }
.pane td { padding: 21px 20px 0; vertical-align: top; }
.pane .view { width: 67px; height: 53px; background: #6c5ce7; }
.f1 { width: 387px; }
.f2 { width: 324px; }
.f3 { width: 277px; }
.f4 { width: 247px; }
.f5 { width: 115px; }
```
